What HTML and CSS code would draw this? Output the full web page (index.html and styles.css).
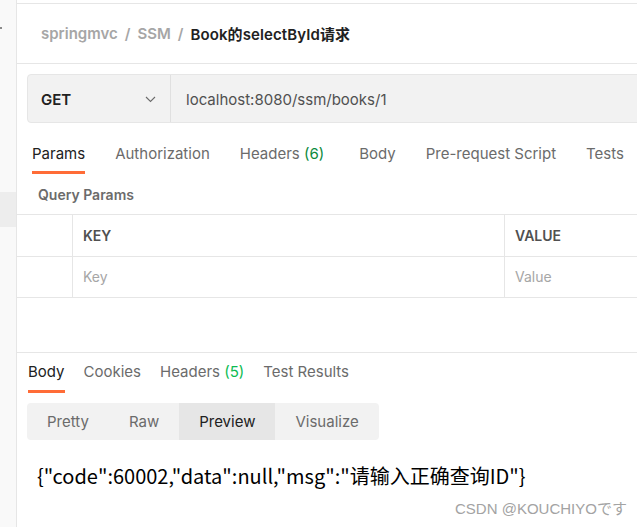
FILE: index.html
```html
<!DOCTYPE html>
<html lang="en">
<head>
    <meta charset="UTF-8">
    <title>Book的selectById请求</title>
    <link rel="stylesheet" href="styles.css">
</head>
<body>
    <!-- Left rail -->
    <div class="sidebar">
        <span class="rail-dot"></span>
        <span class="rail-active"></span>
    </div>

    <div class="main">
        <!-- Breadcrumb -->
        <div class="crumbs">
            <span class="crumb">springmvc</span>
            <span class="sep">/</span>
            <span class="crumb">SSM</span>
            <span class="sep">/</span>
            <span class="crumb current">Book的selectById请求</span>
        </div>

        <!-- Request bar -->
        <div class="request-bar">
            <div class="method">
                <span>GET</span>
                <svg width="11" height="7" viewBox="0 0 11 7"><polyline points="1,1 5.5,5.5 10,1" fill="none" stroke="#6b6b6b" stroke-width="1.1"/></svg>
            </div>
            <div class="url">localhost:8080/ssm/books/1</div>
        </div>

        <!-- Request tabs -->
        <div class="tabs req-tabs">
            <div class="tab active">Params</div>
            <div class="tab">Authorization</div>
            <div class="tab wide">Headers <span class="count dark">(6)</span></div>
            <div class="tab">Body</div>
            <div class="tab">Pre-request Script</div>
            <div class="tab">Tests</div>
        </div>

        <div class="section-title">Query Params</div>

        <div class="params-table">
            <div class="row head">
                <div class="cell check"></div>
                <div class="cell key">KEY</div>
                <div class="cell value">VALUE</div>
            </div>
            <div class="row">
                <div class="cell check"></div>
                <div class="cell key placeholder">Key</div>
                <div class="cell value placeholder">Value</div>
            </div>
        </div>

        <div class="spacer"></div>

        <!-- Response -->
        <div class="response">
            <div class="tabs res-tabs">
                <div class="tab active">Body</div>
                <div class="tab">Cookies</div>
                <div class="tab">Headers <span class="count">(5)</span></div>
                <div class="tab">Test Results</div>
            </div>

            <div class="segmented">
                <div class="seg">Pretty</div>
                <div class="seg">Raw</div>
                <div class="seg active">Preview</div>
                <div class="seg">Visualize</div>
            </div>

            <div class="preview">{"code":60002,"data":null,"msg":"请输入正确查询ID"}</div>
        </div>
    </div>

    <div class="watermark">CSDN @KOUCHIYOです</div>
</body>
</html>
```

FILE: styles.css
```css
/* Base */
body {
    margin: 0;
    display: flex;
    min-height: 527px;
    font-family: Inter, "Noto Sans CJK SC", sans-serif;
    color: #212121;
    background: #fff;
    overflow: hidden;
}

/* Left rail */
.sidebar {
    position: relative;
    width: 16px;
    flex: none;
    background: #f9f9f9;
    border-right: 1px solid #e6e6e6;
}
.rail-dot {
    position: absolute;
    left: 0;
    top: 27px;
    width: 2px;
    height: 2px;
    background: #8a8a8a;
}
.rail-active {
    position: absolute;
    left: 0;
    top: 192px;
    width: 16px;
    height: 35px;
    background: #ededed;
}

.main {
    flex: 1;
    min-width: 0;
}

/* Breadcrumb */
.crumbs {
    margin-top: 3px;
    height: 59px;
    border-top: 1px solid #e6e6e6;
    border-bottom: 1px solid #e6e6e6;
    display: flex;
    align-items: center;
    padding-left: 24px;
    gap: 7px;
    font-size: 15px;
    font-weight: 600;
    color: #a6a6a6;
}
.crumb.current {
    color: #212121;
    letter-spacing: 0.1px;
}

/* Request bar */
.request-bar {
    display: flex;
    margin: 10px -20px 0 10px;
    height: 47px;
    background: #f2f2f2;
    border: 1px solid #e6e6e6;
    border-radius: 4px;
}
.method {
    width: 143px;
    flex: none;
    display: flex;
    align-items: center;
    justify-content: space-between;
    padding: 1px 14px 0 13px;
    box-sizing: border-box;
    border-right: 1px solid #e0e0e0;
    font-size: 15px;
    font-weight: 600;
    color: #212121;
}
.url {
    display: flex;
    align-items: center;
    padding: 1px 0 0 15px;
    font-size: 15px;
    color: #505050;
}

/* Tabs */
.tabs {
    display: flex;
    white-space: nowrap;
}
.tab {
    font-size: 15px;
    line-height: 20px;
    color: #6b6b6b;
    border-bottom: 3px solid transparent;
}
.tab.active {
    color: #212121;
    border-bottom-color: #ff6c37;
}
.count {
    color: #0cbb52;
}
.count.dark {
    color: #0b8a3d;
}
.req-tabs {
    padding-left: 15px;
    gap: 30px;
}
.req-tabs .tab {
    padding: 21px 0 7px;
}
.req-tabs .tab.wide {
    margin-right: 5px;
}
.res-tabs {
    padding-left: 11px;
    gap: 19px;
}
.res-tabs .tab {
    padding: 9px 0 8px;
}

.section-title {
    padding: 11px 0 9px 21px;
    line-height: 20px;
    font-size: 14px;
    font-weight: 600;
    color: #6b6b6b;
}

/* Params table */
.params-table {
    border-top: 1px solid #e6e6e6;
}
.row {
    display: flex;
    height: 40px;
    border-bottom: 1px solid #e6e6e6;
}
.row.head {
    height: 41px;
}
.cell {
    display: flex;
    align-items: center;
    font-size: 14px;
}
.cell.check {
    width: 55px;
    flex: none;
    border-right: 1px solid #e6e6e6;
}
.cell.key {
    width: 432px;
    flex: none;
    padding-left: 10px;
    box-sizing: border-box;
    border-right: 1px solid #e6e6e6;
}
.cell.value {
    padding-left: 10px;
}
.row.head .cell {
    font-weight: 600;
    color: #505050;
}
.row .placeholder {
    color: #a6a6a6;
    padding-bottom: 2px;
}

.spacer {
    height: 54px;
    border-bottom: 1px solid #e6e6e6;
}

/* Response */
.segmented {
    display: flex;
    margin: 10px 0 0 10px;
    width: fit-content;
    height: 37px;
    background: #f2f2f2;
    border-radius: 4px;
    overflow: hidden;
}
.seg {
    display: flex;
    align-items: center;
    padding: 0 20px;
    font-size: 15px;
    color: #6b6b6b;
}
.seg.active {
    background: #e6e6e6;
    color: #212121;
}

.preview {
    padding: 23px 0 0 20px;
    font-family: "Noto Sans CJK SC", sans-serif;
    font-size: 20px;
    line-height: 26px;
    color: #000;
}

.watermark {
    position: absolute;
    left: 455px;
    top: 497px;
    font-family: "Liberation Sans", "Noto Sans CJK JP", sans-serif;
    font-size: 15px;
    color: #a3a3a3;
}
```
